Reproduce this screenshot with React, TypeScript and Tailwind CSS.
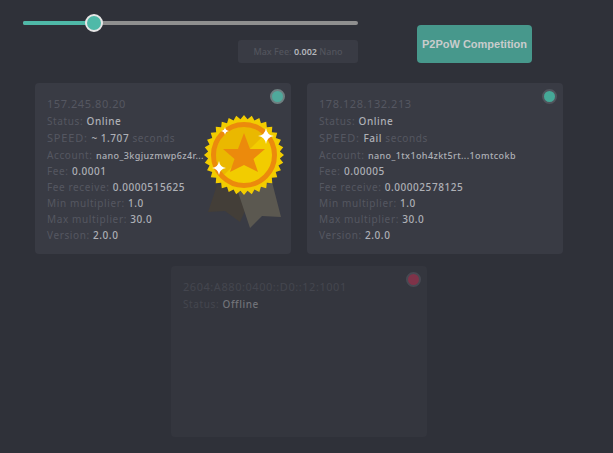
const teeth = Array.from({ length: 64 }, (_, i) => {
  const r = i % 2 === 0 ? 40 : 36
  const a = (i / 64) * Math.PI * 2
  return `${(r * Math.sin(a)).toFixed(2)},${(-r * Math.cos(a)).toFixed(2)}`
}).join(" ")

function Sparkle({ x, y, s }: { x: number; y: number; s: number }) {
  return (
    <path
      transform={`translate(${x} ${y}) scale(${s})`}
      d="M0-1 Q.12-.12 1 0 Q.12 .12 0 1 Q-.12 .12-1 0 Q-.12-.12 0-1Z"
      fill="#fff"
    />
  )
}

function Medal() {
  return (
    <svg className="absolute left-[164px] top-[32px]" width="90" height="120" viewBox="-45 -40 90 120">
      <path d="M-27 30 L-36 57 L-19 56 L-4 67 L1 56 L6 34Z" fill="#433e38" />
      <path d="M-6 37 L6 73 L18 61 L37 62 L28 27Z" fill="#5b5850" />
      <polygon points={teeth} fill="#f2cc00" />
      <circle r="34" fill="#f2cc00" />
      <path d="M-28 0 A28 28 0 0 1 20 -20 L-20 20 A28 28 0 0 1 -28 0Z" fill="#eab800" />
      <circle r="30.5" fill="none" stroke="#ec8a0c" strokeWidth="5" />
      <path d="M0-22 L6 -6 L21 -6 L9.5 4 L14 17 L0 10 L-14 17 L-9.5 4 L-21 -6 L-6 -6Z" fill="#ec8a0c" />
      <Sparkle x={22} y={-19} s={8} />
      <Sparkle x={-25} y={13} s={7} />
      <Sparkle x={-19} y={-24} s={4} />
    </svg>
  )
}

type RowData = { label: string; value: string; suffix?: string; big?: boolean; small?: boolean }

function Row({ label, value, suffix, big, small, dim }: RowData & { dim?: boolean }) {
  return (
    <div className="h-4 leading-4 whitespace-nowrap">
      <span className={big ? "text-[11px] tracking-[0.8px]" : ""}>{label}: </span>
      <span className={`font-medium ${small ? "text-[9px] tracking-[0.4px]" : "tracking-[0.55px]"} ${dim ? "text-[#707278]" : "text-[#aeb0b6]"}`}>{value}</span>
      {suffix ? <span> {suffix}</span> : null}
    </div>
  )
}

type Props = {
  host: string
  dot: string
  dotRing: string
  rows: RowData[]
  medal?: boolean
  dim?: boolean
}

function Card({ host, dot, dotRing, rows, medal, dim }: Props) {
  return (
    <div className={`relative h-[171px] w-[256px] rounded-[4px] px-3 pt-[13px] ${dim ? "bg-[#34363e] text-[#44464f]" : "bg-[#393b44] text-[#555761]"}`}>
      <div className={`absolute right-[6px] top-[6px] size-[15px] rounded-full border-2 ${dot} ${dotRing}`} />
      <div className="mb-[1px] h-4 text-[11px] leading-4 tracking-[0.55px]">{host}</div>
      {rows.map((r, i) => (
        <div key={r.label} className={i === 1 ? "mt-[1px] mb-[1px]" : ""}>
          <Row {...r} dim={dim} />
        </div>
      ))}
      {medal ? <Medal /> : null}
    </div>
  )
}

export default function App() {
  return (
    <div className="h-[453px] w-[613px] overflow-hidden bg-[#2f3139] text-[10px] tracking-[0.62px] font-['Noto_Sans','DejaVu_Sans',sans-serif]">
      <div className="flex pl-[23px] pt-[21px]">
        <div className="w-[335px]">
          <div className="relative mb-[15px] h-[4px] rounded-full bg-[#8f8f8f]">
            <div className="h-full w-[71px] rounded-full bg-[#4fb9a8]" />
            <div className="absolute left-[62px] top-[-7px] size-[18px] rounded-full border-2 border-[#e6e6e6] bg-[#4fb9a8]" />
          </div>
          <div className="ml-auto flex h-[23px] w-[120px] items-center justify-center rounded-[3px] bg-[#393b44] text-[9px] tracking-normal text-[#52545d]">
            <span className="whitespace-nowrap font-medium">Max Fee: <span className="font-semibold text-[#b4b6bb]">0.002</span> Nano</span>
          </div>
        </div>
        <button className="ml-[59px] mt-[4px] h-[38px] w-[115px] rounded-[4px] bg-[#47988c] text-[11px] font-bold tracking-normal text-[#c9cccc] font-['Liberation_Sans',sans-serif]">
          P2PoW Competition
        </button>
      </div>

      <div className="mt-[20px] flex w-[598px] flex-wrap justify-center gap-x-4 gap-y-3">
        <Card
          host="157.245.80.20"
          dot="bg-[#4fa99b]"
          dotRing="border-[#6d7f80]"
          medal
          rows={[
            { label: "Status", value: "Online" },
            { label: "SPEED", value: "~ 1.707", suffix: "seconds", big: true },
            { label: "Account", value: "nano_3kgjuzmwp6z4r...", small: true },
            { label: "Fee", value: "0.0001" },
            { label: "Fee receive", value: "0.0000515625" },
            { label: "Min multiplier", value: "1.0" },
            { label: "Max multiplier", value: "30.0" },
            { label: "Version", value: "2.0.0" },
          ]}
        />
        <Card
          host="178.128.132.213"
          dot="bg-[#45a897]"
          dotRing="border-[#50545c]"
          rows={[
            { label: "Status", value: "Online" },
            { label: "SPEED", value: "Fail", suffix: "seconds", big: true },
            { label: "Account", value: "nano_1tx1oh4zkt5rt...1omtcokb", small: true },
            { label: "Fee", value: "0.00005" },
            { label: "Fee receive", value: "0.00002578125" },
            { label: "Min multiplier", value: "1.0" },
            { label: "Max multiplier", value: "30.0" },
            { label: "Version", value: "2.0.0" },
          ]}
        />
        <Card
          host="2604:A880:0400::D0::12:1001"
          dot="bg-[#7f3349]"
          dotRing="border-[#474952]"
          dim
          rows={[{ label: "Status", value: "Offline" }]}
        />
      </div>
    </div>
  )
}
